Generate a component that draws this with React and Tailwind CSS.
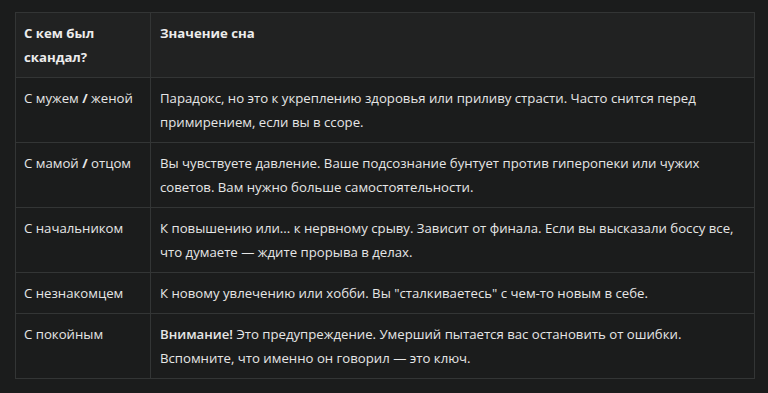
import React from "react";

const rows = [
  {
    who: (
      <>
        С мужем <b className="font-bold">/</b> женой
      </>
    ),
    text: "Парадокс, но это к укреплению здоровья или приливу страсти. Часто снится перед примирением, если вы в ссоре.",
  },
  {
    who: (
      <>
        С мамой <b className="font-bold">/</b> отцом
      </>
    ),
    text: "Вы чувствуете давление. Ваше подсознание бунтует против гиперопеки или чужих советов. Вам нужно больше самостоятельности.",
  },
  {
    who: "С начальником",
    text: "К повышению или... к нервному срыву. Зависит от финала. Если вы высказали боссу все, что думаете — ждите прорыва в делах.",
  },
  {
    who: "С незнакомцем",
    text: "К новому увлечению или хобби. Вы \"сталкиваетесь\" с чем-то новым в себе.",
  },
  {
    who: "С покойным",
    text: (
      <>
        <b className="font-semibold">Внимание!</b> Это предупреждение. Умерший пытается вас остановить от ошибки. Вспомните, что именно он говорил — это ключ.
      </>
    ),
  },
];

export default function App() {
  return (
    <div
      className="w-[768px] h-[393px] bg-[#1b1c1c] pt-[12px] pl-[15px] text-[13.2px] leading-[24px] text-[#e6e6e6]"
      style={{ fontFamily: '"Open Sans", "Noto Sans", sans-serif' }}
    >
      <table className="w-[740px] border-collapse border border-[#333535] table-fixed">
        <colgroup>
          <col className="w-[135px]" />
          <col />
        </colgroup>
        <thead>
          <tr className="bg-[#212222]">
            <th className="border border-[#333535] px-[8px] pt-[8px] pb-[8px] text-left align-top font-bold text-[#ececec]">
              С кем был скандал?
            </th>
            <th className="border border-[#333535] px-[9px] pt-[8px] pb-[8px] text-left align-top font-bold text-[#ececec]">
              Значение сна
            </th>
          </tr>
        </thead>
        <tbody>
          {rows.map((r, i) => (
            <tr key={i}>
              <td className="border border-[#333535] px-[8px] py-[8px] align-top">{r.who}</td>
              <td className="border border-[#333535] px-[9px] py-[8px] align-top">{r.text}</td>
            </tr>
          ))}
        </tbody>
      </table>
    </div>
  );
}
